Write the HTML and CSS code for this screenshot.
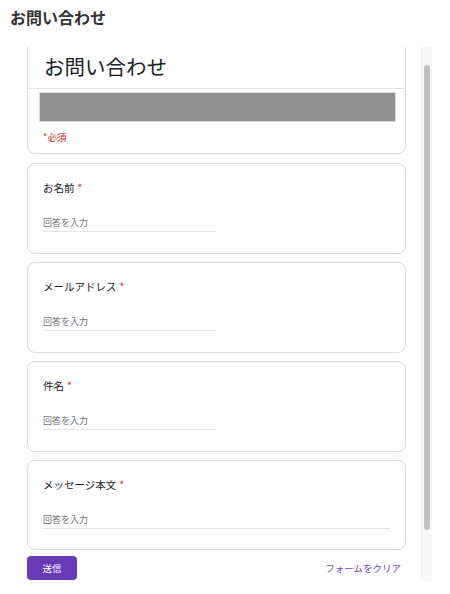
FILE: index.html
```html
<!DOCTYPE html>
<html lang="ja">
<head>
  <meta charset="UTF-8">
  <title>お問い合わせ</title>
  <link rel="stylesheet" href="styles.css">
</head>
<body>
  <h1 class="page-title">お問い合わせ</h1>

  <div class="frame">
    <div class="form">
      <div class="card head-card">
        <div class="form-title">お問い合わせ</div>
        <div class="banner"></div>
        <div class="required-note">*必須</div>
      </div>

      <div class="card">
        <div class="label">お名前<span class="star">*</span></div>
        <div class="answer">回答を入力</div>
      </div>

      <div class="card">
        <div class="label">メールアドレス<span class="star">*</span></div>
        <div class="answer">回答を入力</div>
      </div>

      <div class="card">
        <div class="label">件名<span class="star">*</span></div>
        <div class="answer">回答を入力</div>
      </div>

      <div class="card">
        <div class="label">メッセージ本文<span class="star">*</span></div>
        <div class="answer wide">回答を入力</div>
      </div>

      <div class="actions">
        <button class="submit">送信</button>
        <span class="clear">フォームをクリア</span>
      </div>
    </div>

    <div class="scrollbar">
      <div class="thumb"></div>
    </div>
  </div>
</body>
</html>
```

FILE: styles.css
```css
body {
  margin: 0;
  background-color: #fff;
  font-family: "Noto Sans CJK JP", "Noto Sans", sans-serif;
}
.page-title {
  margin: 6px 0 19px 10px;
  font-size: 16px;
  line-height: 22px;
  font-weight: bold;
  color: #333;
}
.frame {
  display: flex;
  width: 432px;
  height: 534px;
  overflow: hidden;
}
.form {
  flex: 1;
  padding: 0 15px 0 27px;
  overflow: hidden;
}
.card {
  border: 1px solid #dadce0;
  border-radius: 8px;
  background-color: #fff;
  padding: 16px 15px 21px 15px;
  margin-bottom: 8px;
}
.card:nth-child(5) {
  padding-bottom: 20px;
}
.head-card {
  margin-top: -20px;
  margin-bottom: 9px;
  padding: 24px 0 9px 0;
}
.form-title {
  font-size: 20.5px;
  line-height: 28px;
  color: #202124;
  padding: 0 16px 8px 16px;
  border-bottom: 1px solid #e6e6e6;
}
.banner {
  height: 30px;
  margin: 3px 9px 0 11px;
  background-color: #909090;
  border: 1px solid #dadada;
  box-sizing: border-box;
}
.required-note {
  margin: 8px 0 0 15px;
  font-size: 9.5px;
  line-height: 14px;
  color: #d93025;
}
.label {
  font-size: 10.5px;
  line-height: 16px;
  color: #202124;
}
.star {
  color: #d93025;
  margin-left: 3px;
}
.answer {
  margin-top: 20px;
  width: 173px;
  font-size: 9px;
  line-height: 14px;
  padding-bottom: 1px;
  color: #70757a;
  border-bottom: 1px solid #e6e6e6;
}
.answer.wide {
  width: auto;
}
.actions {
  display: flex;
  justify-content: space-between;
  align-items: center;
  margin-top: -2px;
  padding-right: 5px;
}
.submit {
  width: 50px;
  height: 24px;
  border: none;
  border-radius: 4px;
  background-color: #673ab7;
  color: #fff;
  font-family: inherit;
  font-size: 9.5px;
}
.clear {
  font-size: 9.5px;
  color: #7248b9;
}
.scrollbar {
  width: 11px;
  background-color: #f8f8f8;
  border-left: 1px solid #f0f0f0;
  box-sizing: border-box;
  padding: 18px 2px 0 2px;
}
.thumb {
  height: 465px;
  background-color: #c1c1c1;
  border-radius: 3px;
}
```
